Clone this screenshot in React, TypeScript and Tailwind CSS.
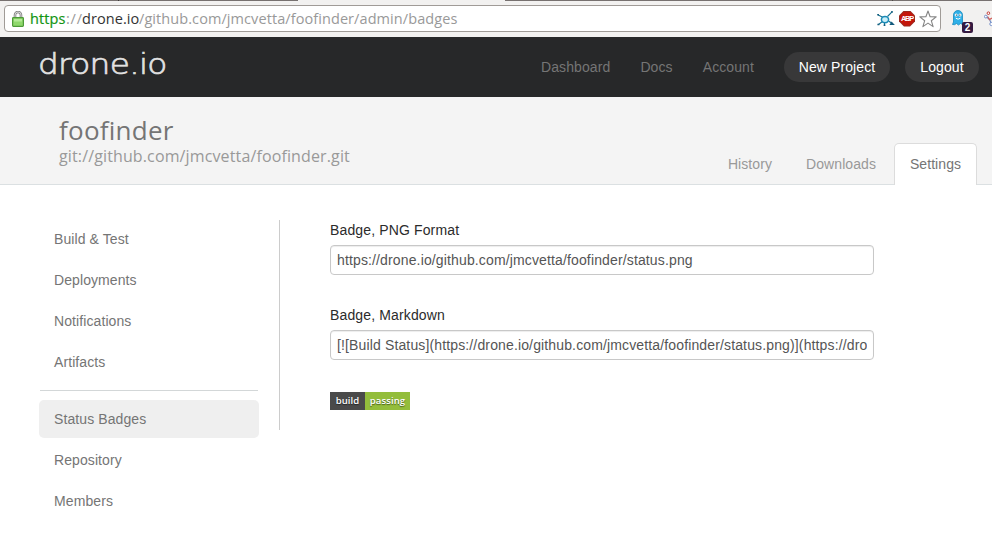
import type { ReactNode } from "react";

const sans = "font-['Liberation_Sans',sans-serif]";

function LockIcon() {
  return (
    <svg width="12" height="16" viewBox="0 0 12 16" className="shrink-0">
      <path d="M3 8V4a3 3 0 0 1 6 0v4" fill="none" stroke="#858585" strokeWidth="2.6" />
      <path d="M3 8V4a3 3 0 0 1 6 0v4" fill="none" stroke="#dedede" strokeWidth="0.9" />
      <rect x="0.6" y="6.6" width="10.8" height="8.8" rx="0.8" fill="#8fd86c" stroke="#4d9a38" strokeWidth="1.2" />
      <path d="M2 8h8v2.5H2z" fill="#b4ea98" />
    </svg>
  );
}

function MoleculeIcon() {
  return (
    <svg width="18" height="16" viewBox="0 0 18 16" className="shrink-0">
      <path d="M1.2 4l4.6 2.2M1.5 13.5l4-3M10.5 5.5l4.5-4.6M11.5 10l3 2M7.5 12v2" stroke="#17708f" strokeWidth="1.1" fill="none" />
      <ellipse cx="8" cy="8.6" rx="3.6" ry="3.2" fill="#c9eef8" stroke="#1a8bb8" strokeWidth="1.5" />
      <path d="M.2 3h1.8v1.5H.2zM.4 12.8h2v1.5h-2zM6.6 13.4h1.8V15H6.6zM14.2 0h1.6v1.8h-1.6z" fill="#155f80" />
      <path d="M12.4 14l2.2-3.6 3.2 3.6z" fill="#14597c" />
    </svg>
  );
}

function AbpIcon() {
  return (
    <div className="flex h-4 w-4 shrink-0 items-center justify-center bg-[#98291f] [clip-path:polygon(31%_0,69%_0,100%_31%,100%_69%,69%_100%,31%_100%,0_69%,0_31%)]">
      <div className="flex h-[14px] w-[14px] items-center justify-center bg-[#c4160b] [clip-path:polygon(31%_0,69%_0,100%_31%,100%_69%,69%_100%,31%_100%,0_69%,0_31%)]">
        <span className={`${sans} text-[7.5px] leading-[9px] font-bold tracking-[-1.2px] text-white`}>ABP</span>
      </div>
    </div>
  );
}

function StarIcon() {
  return (
    <svg width="18" height="18" viewBox="0 0 18 18" className="shrink-0">
      <path d="M9 1l2.1 5.7 6.1.2-4.9 3.8 1.8 5.9L9 13.1l-5.1 3.5 1.8-5.9L.8 6.9l6.1-.2z" fill="#fff" stroke="#858585" strokeWidth="1.1" strokeLinejoin="round" />
    </svg>
  );
}

function GhostIcon() {
  return (
    <svg width="14" height="16" viewBox="0 0 14 16">
      <path d="M2.5 12V5a4.5 4.5 0 0 1 9 0v9.5l-2-1-2 1.5-2-1.5-2 1.2-2-.2z" fill="#2fb0e8" stroke="#1689bd" strokeWidth=".8" />
      <circle cx="5.2" cy="5" r="1.5" fill="#fff" />
      <circle cx="9" cy="5" r="1.5" fill="#fff" />
      <circle cx="5.4" cy="5.1" r=".7" fill="#163c55" />
      <circle cx="8.8" cy="5.1" r=".7" fill="#163c55" />
      <path d="M4.8 8.2q2.3 2 4.6 0" stroke="#fff" strokeWidth="1" fill="none" />
    </svg>
  );
}

function BranchIcon() {
  return (
    <svg width="8" height="16" viewBox="0 0 8 16">
      <path d="M2.6 6l3 2.5L7.5 13" stroke="#7590c8" strokeWidth="1.2" fill="none" />
      <path d="M3.5 5.5L5.5 8.5L8 7" stroke="#d0605c" strokeWidth="1.3" fill="none" />
      <circle cx="4.4" cy="2.2" r="1.3" fill="#fff" stroke="#c33b35" />
      <circle cx="1.8" cy="5.6" r="1.4" fill="#fff" stroke="#7590c8" />
      <circle cx="7.4" cy="13" r="1.6" fill="#fff" stroke="#7590c8" />
    </svg>
  );
}

function BrowserBar() {
  return (
    <div className="h-[37px] bg-[#f2f1f0]">
      <div className="flex h-px">
        <div className="w-[118px] bg-[#777170]" />
        <div className="w-px bg-[#3f3b3a]" />
        <div className="w-[179px] bg-[#777170]" />
        <div className="w-[207px] bg-[#f2f1f0]" />
        <div className="w-[387px] bg-[#777170]" />
        <div className="w-px bg-[#4b4746]" />
        <div className="flex-1 bg-[#777170]" />
      </div>
      <div className="flex pt-1 pl-1">
        <div className="flex h-[27px] w-[937px] items-center rounded-[4px] border border-[#a09b97] bg-white pr-[3px] pl-[7px]">
          <LockIcon />
          <div className="ml-[6px] flex flex-1 font-['Open_Sans','Noto_Sans',sans-serif] text-[14.5px] leading-5 tracking-[0.08px] whitespace-pre text-[#999]">
            <span className="w-[36px] text-[#129512] [-webkit-text-stroke:0.2px_#129512]">https</span>
            <span className="w-[16px] tracking-[0.8px]">://</span>
            <span className="w-[57px] text-[#333]">drone.io</span>
            <span>/github.com/jmcvetta/foofinder/admin/badges</span>
          </div>
          <div className="flex items-center gap-[4px]">
            <MoleculeIcon />
            <AbpIcon />
            <StarIcon />
          </div>
        </div>
        <div className="relative ml-[10px] h-[27px] w-6 pt-[5px]">
          <GhostIcon />
          <span className={`absolute top-[17px] left-[11px] flex h-[11px] w-[11px] items-center justify-center rounded-[2px] bg-[#351a40] ${sans} text-[10px] leading-none font-bold text-white`}>2</span>
        </div>
        <div className="ml-[9px] w-2 overflow-hidden pt-[6px]"><BranchIcon /></div>
      </div>
    </div>
  );
}

function Pill({ children, width }: { children: ReactNode; width: string }) {
  return <a className={`flex h-[30px] items-center justify-center rounded-full bg-[#383839] text-white ${width}`}>{children}</a>;
}

function SiteHeader() {
  return (
    <header className="flex h-[60px] items-center justify-between bg-[#272829] pr-[13px] pl-[38px]">
      <div className="-mt-[7px] origin-left scale-x-[1.13] font-['DejaVu_Sans_Light','DejaVu_Sans',sans-serif] text-[29px] leading-[40px] font-extralight tracking-[-0.6px] text-[#e2e2e2] [-webkit-text-stroke:0.7px_#e2e2e2]">drone.io</div>
      <nav className="flex items-center text-[14px] tracking-[0.1px] text-[#757575]">
        <a className="mr-[30px]">Dashboard</a>
        <a className="mr-[30px]">Docs</a>
        <a className="mr-[30px]">Account</a>
        <Pill width="w-[106px] mr-[15px]">New Project</Pill>
        <Pill width="w-[74px]">Logout</Pill>
      </nav>
    </header>
  );
}

function ProjectHeader() {
  return (
    <section className="flex h-[88px] justify-between border-b border-[#dbe0e2] bg-[#f4f4f4] pr-[15px] pl-[59px]">
      <div className="pt-[18px] font-['Open_Sans',sans-serif]">
        <h1 className="text-[26px] leading-[30px] tracking-[0.25px] text-[#757575]">foofinder</h1>
        <h2 className="text-[16px] leading-[22px] tracking-[0.13px] text-[#999]">git://github.com/jmcvetta/foofinder.git</h2>
      </div>
      <div className="flex pt-[46px] text-[14px] tracking-[0.08px] text-[#999]">
        <a className="mr-[34px] leading-[42px]">History</a>
        <a className="mr-[18px] leading-[42px]">Downloads</a>
        <a className="h-[42px] w-[83px] rounded-t-[5px] border border-b-0 border-[#dcdcdc] bg-white text-center leading-[40px] text-[#757575]">Settings</a>
      </div>
    </section>
  );
}

function MenuItem({ label, active = false }: { label: string; active?: boolean }) {
  return <a className={`block h-[38px] rounded-[5px] pl-[15px] leading-[38px] ${active ? "bg-[#efefef]" : ""}`}>{label}</a>;
}

function Sidebar() {
  return (
    <aside className="flex w-[220px] flex-col text-[14px] tracking-[0.09px] text-[#757575]">
      <div className="flex flex-col gap-[3px]">
        {["Build & Test", "Deployments", "Notifications", "Artifacts"].map((l) => <MenuItem key={l} label={l} />)}
      </div>
      <hr className="mx-px mt-[9px] mb-[9px] border-[#d3d7d8]" />
      <div className="flex flex-col gap-[3px]">
        <MenuItem label="Status Badges" active />
        <MenuItem label="Repository" />
        <MenuItem label="Members" />
      </div>
    </aside>
  );
}

function Field({ label, value }: { label: string; value: string }) {
  return (
    <label className="mb-[30px] block h-[55px] text-[14px] tracking-[0.138px]">
      <span className="block h-[25px] leading-5 text-[#2b2b2b]">{label}</span>
      <span className="block h-[30px] w-[544px] rounded-[4px] border border-[#c8c8c8] bg-white px-[6px] leading-[28px] text-[#555] shadow-[inset_0_1px_1px_rgba(0,0,0,0.075)]">
        <span className="block overflow-hidden whitespace-nowrap">{value}</span>
      </span>
    </label>
  );
}

export default function App() {
  return (
    <div className={`h-[554px] w-[992px] overflow-hidden bg-white ${sans}`}>
      <BrowserBar />
      <SiteHeader />
      <ProjectHeader />
      <main className="flex pt-[35px] pl-[39px]">
        <Sidebar />
        <div className="ml-[20px] h-[210px] w-px bg-[#ccc]" />
        <div className="ml-[50px]">
          <Field label="Badge, PNG Format" value="https://drone.io/github.com/jmcvetta/foofinder/status.png" />
          <Field label="Badge, Markdown" value="[![Build Status](https://drone.io/github.com/jmcvetta/foofinder/status.png)](https://dro" />
          <div className="mt-[32px] flex h-[18px] w-[80px] text-center font-['Open_Sans',sans-serif] text-[9.5px] leading-[18px] font-semibold tracking-[0.1px] text-white [text-shadow:0_1px_1px_rgba(0,0,0,0.5)]">
            <span className="w-[35px] bg-[#4a4a4a]">build</span>
            <span className="w-[45px] bg-[#93bd3b]">passing</span>
          </div>
        </div>
      </main>
    </div>
  );
}
